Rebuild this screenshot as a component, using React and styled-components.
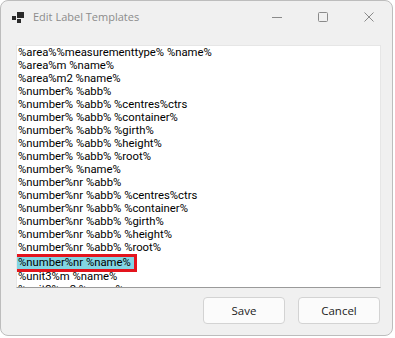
import React from "react";
import styled, { createGlobalStyle } from "styled-components";

const Global = createGlobalStyle`
  html, body { margin: 0; padding: 0; background: #ffffff; }
  #root { width: 395px; height: 338px; }
`;

const Window = styled.div`
  box-sizing: border-box;
  width: 393px;
  height: 336px;
  background: #f0f0f0;
  border: 1px solid #bdbdbd;
  border-radius: 8px;
  display: flex;
  flex-direction: column;
  overflow: hidden;
`;

const TitleBar = styled.div`
  height: 32px;
  flex: none;
  display: flex;
  align-items: center;
  padding-left: 11px;
`;

const Title = styled.span`
  margin-left: 9px;
  font-family: "Open Sans", "Noto Sans", sans-serif;
  font-size: 11px;
  color: #8c8c8c;
  flex: 1;
  padding-bottom: 1px;
`;

const Controls = styled.div`
  display: flex;
  align-items: center;
  height: 100%;
`;

const Ctrl = styled.div`
  width: 46px;
  height: 100%;
  display: flex;
  align-items: center;
  justify-content: center;
`;

const Body = styled.div`
  flex: 1;
  display: flex;
  flex-direction: column;
  padding: 12px 12px 0 15px;
`;

const ListBox = styled.div`
  box-sizing: border-box;
  width: 365px;
  height: 243px;
  background: #ffffff;
  border: 1px solid #e6e6e6;
  border-bottom-color: #9a9a9a;
  overflow: hidden;
  padding-left: 1px;
  font-family: Roboto, "Liberation Sans", Arial, sans-serif;
  font-size: 11.3px;
  color: #000;
`;

const Item = styled.div`
  height: 13px;
  line-height: 13px;
  white-space: nowrap;
`;

const Selected = styled.div`
  height: 12px;
  line-height: 12px;
  width: 116px;
  white-space: nowrap;
  margin: 3px 0 1px -3px;
  padding-left: 3px;
  background: #82d5e3;
  box-shadow: 0 0 0 3px #e3141d;
  position: relative;
`;

const Footer = styled.div`
  display: flex;
  justify-content: flex-end;
  gap: 13px;
  margin-top: 9px;
`;

const Button = styled.button`
  box-sizing: border-box;
  width: 82px;
  height: 27px;
  border: 1px solid #d3d3d3;
  border-radius: 4px;
  background: #fbfbfb;
  font-family: "Open Sans", "Noto Sans", sans-serif;
  font-size: 11.5px;
  color: #1b1b1b;
  padding: 0;
`;

const items = [
  "%area%%measurementtype% %name%",
  "%area%m %name%",
  "%area%m2 %name%",
  "%number% %abb%",
  "%number% %abb% %centres%ctrs",
  "%number% %abb% %container%",
  "%number% %abb% %girth%",
  "%number% %abb% %height%",
  "%number% %abb% %root%",
  "%number% %name%",
  "%number%nr %abb%",
  "%number%nr %abb% %centres%ctrs",
  "%number%nr %abb% %container%",
  "%number%nr %abb% %girth%",
  "%number%nr %abb% %height%",
  "%number%nr %abb% %root%",
];

const AppIcon = () => (
  <svg width="12" height="11" viewBox="0 0 12 11">
    <rect x="0" y="4" width="4" height="4" fill="#2b2b2b" />
    <rect x="5" y="0" width="7" height="6" fill="#2b2b2b" />
    <rect x="5" y="7" width="4" height="4" fill="#2b2b2b" />
  </svg>
);

export default function App() {
  return (
    <>
      <Global />
      <Window>
        <TitleBar>
          <AppIcon />
          <Title>Edit Label Templates</Title>
          <Controls>
            <Ctrl>
              <svg width="10" height="10" viewBox="0 0 10 10">
                <line x1="0" y1="5.5" x2="10" y2="5.5" stroke="#8a8a8a" strokeWidth="1" />
              </svg>
            </Ctrl>
            <Ctrl>
              <svg width="10" height="10" viewBox="0 0 10 10">
                <rect x="0.5" y="0.5" width="9" height="9" rx="1" fill="none" stroke="#8a8a8a" strokeWidth="1" />
              </svg>
            </Ctrl>
            <Ctrl>
              <svg width="10" height="10" viewBox="0 0 10 10">
                <path d="M0.5 0.5 L9.5 9.5 M9.5 0.5 L0.5 9.5" stroke="#8a8a8a" strokeWidth="1" />
              </svg>
            </Ctrl>
          </Controls>
        </TitleBar>
        <Body>
          <ListBox>
            {items.map((t) => (
              <Item key={t}>{t}</Item>
            ))}
            <Selected>%number%nr %name%</Selected>
            <Item>%unit3%m %name%</Item>
            <Item>%unit3%m2 %name%</Item>
          </ListBox>
          <Footer>
            <Button>Save</Button>
            <Button>Cancel</Button>
          </Footer>
        </Body>
      </Window>
    </>
  );
}
